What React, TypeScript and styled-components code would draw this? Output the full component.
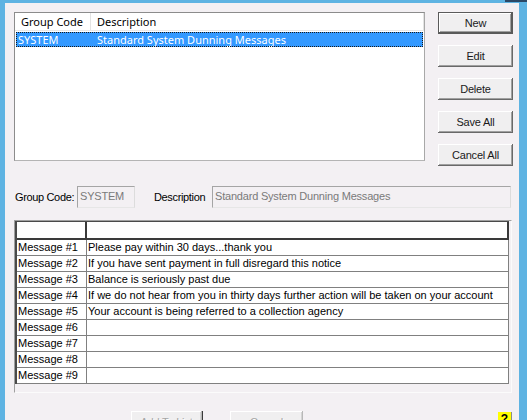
import React from "react";
import styled, { createGlobalStyle } from "styled-components";

const Global = createGlobalStyle`
  html, body { margin: 0; padding: 0; overflow: hidden; background: #5eb3e2; }
  * { box-sizing: border-box; }
`;

const BODY_BG = "#f3f0f3";
const SANS = `"Liberation Sans", Arial, sans-serif`;
const UI = `"Noto Sans", "Liberation Sans", sans-serif`;

const Window = styled.div`
  width: 527px;
  height: 420px;
  display: flex;
  flex-direction: column;
  background: #5eb3e2;
`;

const TitleEdge = styled.div`
  height: 3px;
  flex-shrink: 0;
  display: flex;
  justify-content: flex-end;
`;

const CloseEdge = styled.div`
  width: 22px;
  height: 2px;
  background: #2c4866;
`;

const FrameRow = styled.div`
  flex: 1;
  display: flex;
  padding: 0 8px 0 5px;
  min-height: 0;
`;

const Body = styled.div`
  flex: 1;
  background: ${BODY_BG};
  padding: 9px 6px 0 9px;
  display: flex;
  flex-direction: column;
  overflow: hidden;

  & > * {
    flex-shrink: 0;
  }
`;

const TopSection = styled.div`
  display: flex;
  gap: 13px;
  align-items: flex-start;
`;

const ListBox = styled.div`
  width: 411px;
  height: 149px;
  background: #fff;
  border: 1px solid #8c8c8c;
  border-right-color: #a8a8a8;
  border-bottom-color: #b4b4b4;
  display: flex;
  flex-direction: column;
`;

const ListHeader = styled.div`
  display: flex;
  height: 18px;
  border-bottom: 1px solid #e8e8e8;
  font-family: ${UI};
  font-size: 11px;
  color: #000;
`;

const HeaderCell = styled.div<{ $width?: number }>`
  ${(p) => (p.$width ? `width: ${p.$width}px;` : "flex: 1;")}
  padding: 0 0 0 6px;
  display: flex;
  align-items: center;
  border-right: 1px solid #e3e3e3;
  white-space: nowrap;
`;

const ListRow = styled.div<{ $selected?: boolean }>`
  margin: 1px 1px 0 1px;
  height: 15px;
  display: flex;
  align-items: center;
  padding-left: 2px;
  font-family: ${UI};
  font-size: 11px;
  white-space: nowrap;
  color: ${(p) => (p.$selected ? "#fff" : "#000")};
  background: ${(p) => (p.$selected ? "#3399ff" : "transparent")};
  outline: ${(p) => (p.$selected ? "1px dotted #1a1a1a" : "none")};
  outline-offset: -1px;
`;

const RowCell = styled.span<{ $width?: number }>`
  ${(p) => (p.$width ? `width: ${p.$width}px;` : "flex: 1;")}
`;

const ButtonColumn = styled.div`
  display: flex;
  flex-direction: column;
  gap: 11px;
`;

const WinButton = styled.button<{ $default?: boolean; $w?: number; $focusEdge?: boolean }>`
  width: ${(p) => p.$w ?? 75}px;
  height: 22px;
  padding: 0;
  margin: 0;
  flex-shrink: 0;
  font-family: ${SANS};
  font-size: 11px;
  letter-spacing: -0.2px;
  color: #1a1a1a;
  background: #f0eff0;
  border: ${(p) => (p.$default ? "1px solid #5a5a5a" : "none")};
  box-shadow: ${(p) =>
    p.$default
      ? "inset -1px -1px #5a5a5a, inset 1px 1px #fff, inset -2px -2px #a0a0a0"
      : "inset -1px -1px #696969, inset 1px 1px #fff, inset -2px -2px #a0a0a0"};
  text-align: center;
  cursor: default;

  &:disabled {
    color: #a6a6a6;
    text-shadow: 1px 1px #fff;
    box-shadow: inset -1px -1px #b8b8b8, inset 1px 1px #fff, inset -2px -2px #d4d4d4;
    ${(p) => (p.$focusEdge ? "border-right: 1px solid #3a3a3a;" : "")}
  }
`;

const FieldRow = styled.div`
  margin-top: 20px;
  display: flex;
  align-items: flex-start;
  height: 22px;
`;

const Label = styled.label<{ $width: number; $offset?: number }>`
  width: ${(p) => p.$width}px;
  margin-left: ${(p) => p.$offset ?? 0}px;
  padding-top: 5px;
  font-family: ${SANS};
  font-size: 11px;
  letter-spacing: -0.35px;
  color: #000;
  white-space: nowrap;
`;

const ReadField = styled.div<{ $width: number }>`
  width: ${(p) => p.$width}px;
  height: 22px;
  padding: 3px 0 0 2px;
  font-family: ${SANS};
  font-size: 11px;
  letter-spacing: -0.2px;
  color: #7a7a7a;
  background: ${BODY_BG};
  border: 1px solid #a5a5a5;
  border-right-color: #dcdcdc;
  border-bottom-color: #e6e6e6;
  white-space: nowrap;
  overflow: hidden;
`;

const GridFrame = styled.div`
  margin-top: 12px;
  width: 498px;
  height: 173px;
  border: 1px solid #a0a0a0;
  border-right-color: #fbfbfb;
  border-bottom-color: #fbfbfb;
  background: ${BODY_BG};
  overflow: hidden;
`;

const Table = styled.div`
  display: grid;
  grid-template-columns: 70px 422px;
  grid-template-rows: 18px repeat(9, 16px);
  border-left: 2px solid #4a4a4a;
  border-top: 1px solid #4a4a4a;
  width: 494px;
`;

const HeadCell = styled.div`
  background: #fff;
  border-right: 2px solid #3a3a3a;
  border-bottom: 2px solid #3a3a3a;
`;

const HeadRow = styled.div`
  display: contents;
`;

const Cell = styled.div`
  background: #fff;
  border-right: 1px solid #808080;
  border-bottom: 1px solid #808080;
  padding-left: 1px;
  font-family: ${SANS};
  font-size: 11px;
  line-height: 15px;
  color: #000;
  white-space: nowrap;
  overflow: hidden;
`;

const BottomRow = styled.div`
  margin-top: 18px;
  display: flex;
  align-items: flex-start;
  padding-left: 117px;
  gap: 27px;
`;

const HelpBox = styled.div`
  margin-left: auto;
  margin-right: 1px;
  margin-top: 1px;
  width: 14px;
  height: 14px;
  background: #ffff00;
  border-right: 1px solid #8a8a8a;
  font-family: ${SANS};
  font-weight: bold;
  font-size: 12px;
  line-height: 14px;
  text-align: center;
  color: #000;
`;

const messages = [
  "Please pay within 30 days...thank you",
  "If you have sent payment in full disregard this notice",
  "Balance is seriously past due",
  "If we do not hear from you in thirty days further action will be taken on your account",
  "Your account is being referred to a collection agency",
  "",
  "",
  "",
  "",
];

export default function App() {
  return (
    <>
      <Global />
      <Window>
        <TitleEdge>
          <CloseEdge />
        </TitleEdge>
        <FrameRow>
          <Body>
            <TopSection>
              <ListBox>
                <ListHeader>
                  <HeaderCell $width={76}>Group Code</HeaderCell>
                  <HeaderCell>Description</HeaderCell>
                </ListHeader>
                <ListRow $selected>
                  <RowCell $width={79}>SYSTEM</RowCell>
                  <RowCell>Standard System Dunning Messages</RowCell>
                </ListRow>
              </ListBox>
              <ButtonColumn>
                <WinButton $default>New</WinButton>
                <WinButton>Edit</WinButton>
                <WinButton>Delete</WinButton>
                <WinButton>Save All</WinButton>
                <WinButton>Cancel All</WinButton>
              </ButtonColumn>
            </TopSection>

            <FieldRow>
              <Label $width={62} $offset={1}>Group Code:</Label>
              <ReadField $width={58}>SYSTEM</ReadField>
              <Label $width={58} $offset={19}>Description</Label>
              <ReadField $width={299}>Standard System Dunning Messages</ReadField>
            </FieldRow>

            <GridFrame>
              <Table>
                <HeadRow>
                  <HeadCell />
                  <HeadCell />
                </HeadRow>
                {messages.map((m, i) => (
                  <React.Fragment key={i}>
                    <Cell>Message #{i + 1}</Cell>
                    <Cell>{m}</Cell>
                  </React.Fragment>
                ))}
              </Table>
            </GridFrame>

            <BottomRow>
              <WinButton $w={72} disabled $focusEdge>
                Add To List
              </WinButton>
              <WinButton $w={73} disabled>
                Cancel
              </WinButton>
              <HelpBox>?</HelpBox>
            </BottomRow>
          </Body>
        </FrameRow>
      </Window>
    </>
  );
}
